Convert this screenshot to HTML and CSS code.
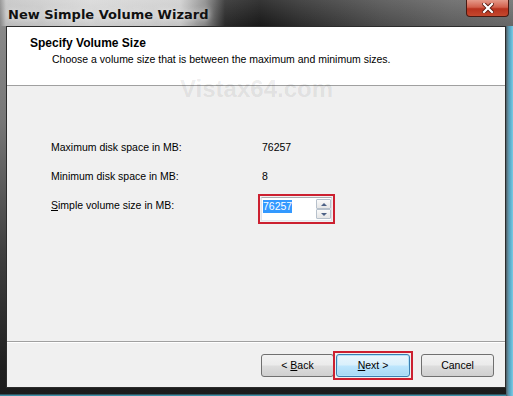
FILE: index.html
```html
<!doctype html>
<html>
<head>
  <title>New Simple Volume Wizard</title>
  <link rel="stylesheet" href="styles.css">
</head>
<body>
  <div class="window">
    <div class="titlebar">
      <span class="title">New Simple Volume Wizard</span>
      <div class="close">
        <svg width="12" height="10" viewBox="0 0 12 10">
          <path d="M2 1 L10 9 M10 1 L2 9" stroke="#5a1a10" stroke-width="4" stroke-linecap="square"/>
          <path d="M2 1 L10 9 M10 1 L2 9" stroke="#fff" stroke-width="2.2" stroke-linecap="square"/>
        </svg>
      </div>
    </div>
    <div class="frame">
      <div class="client">
        <div class="header">
          <div class="heading">Specify Volume Size</div>
          <div class="subheading">Choose a volume size that is between the maximum and minimum sizes.</div>
        </div>
        <div class="content">
          <div class="row row-max">
            <span class="label">Maximum disk space in MB:</span>
            <span class="value">76257</span>
          </div>
          <div class="row row-min">
            <span class="label">Minimum disk space in MB:</span>
            <span class="value">8</span>
          </div>
          <div class="row row-size">
            <span class="label label-size"><u>S</u>imple volume size in MB:</span>
            <div class="mark spin-mark">
              <div class="spin">
                <span class="selected">76257</span>
                <div class="spin-buttons">
                  <div class="spin-btn"><span class="arrow-up"></span></div>
                  <div class="spin-btn"><span class="arrow-down"></span></div>
                </div>
              </div>
            </div>
          </div>
        </div>
        <div class="footer">
          <button class="btn">&lt; <u>B</u>ack</button>
          <div class="mark btn-mark">
            <button class="btn btn-default"><u>N</u>ext &gt;</button>
          </div>
          <button class="btn btn-cancel">Cancel</button>
        </div>
        <div class="watermark">Vistax64.com</div>
      </div>
    </div>
  </div>
</body>
</html>
```

FILE: styles.css
```css
body { margin: 0; font-family: "Liberation Sans", Arial, sans-serif; font-size: 10.5px; color: #000; }

.window { width: 513px; height: 396px; display: flex; flex-direction: column; overflow: hidden;
  background: linear-gradient(to right, transparent 506px, #4b5a62 506px, #5f8da0 508px, #58a9c8 510px, #7ccbe4 513px),
              linear-gradient(to bottom, #8e8e8e 0, #777 120px, #404040 250px, #1f1f1f 370px, #1c1c1c 394px, #3f8ea6 395px); }

.titlebar { height: 26px; flex: none; display: flex; justify-content: space-between; align-items: flex-start;
  background: linear-gradient(to bottom, rgba(255,255,255,0.12), rgba(0,0,0,0.05)),
              linear-gradient(to right, #8c8c8c 0, #c4c4c4 6px, #d8d8d8 90px, #cfcfcf 180px, #8a8a8a 205px, #2a2a2a 225px, #1a1a1a 260px, #2e2e2e 300px, #4e4e4e 380px, #626262 450px, #6c6c6c 513px); }
.title { padding: 6px 0 0 8px; line-height: 17px; font-family: "DejaVu Sans", sans-serif; font-weight: bold; font-size: 13px; color: #111;
  text-shadow: 0 0 6px #eee; }
.close { width: 41px; height: 16px; margin-right: 4px; border: 1px solid #4a1a12; border-top: none; border-radius: 0 0 4px 4px;
  display: flex; align-items: center; justify-content: center;
  background: linear-gradient(to bottom, #e59a8a 0, #d2604c 45%, #b8321e 55%, #c4482e 100%); }

.frame { flex: 1; padding: 0 7px 8px 6px; display: flex; }
.client { position: relative; flex: 1; display: flex; flex-direction: column; border: 1px solid #2c2c2c; background: #f0f0f0; }

.header { height: 59px; flex: none; box-sizing: border-box; padding: 9px 0 0 23px; background: #fff; border-bottom: 1px solid #a0a0a0; }
.heading { font-weight: bold; font-size: 12px; line-height: 15px; }
.subheading { margin-top: 2px; padding-left: 22px; line-height: 13px; }

.content { flex: 1; padding: 55px 0 0 44px; border-bottom: 1px solid #a0a0a0; }
.row { display: flex; align-items: flex-start; line-height: 13px; }
.row-max { height: 29px; }
.row-min { height: 24px; }
.label { width: 211px; }
.label-size { margin-top: 5px; }

.mark { border: 2px solid #cc2030; padding: 1px; }
.spin-mark { margin-left: -4px; }
.spin { width: 69px; height: 22px; display: flex; justify-content: space-between; align-items: flex-start; background: #fff;
  border: 1px solid #abadb3; border-color: #abadb3 #dbdfe6 #e3e9ef #e2e3ea; }
.selected { margin: 2px 0 0 1px; background: #3399ff; color: #fff; line-height: 13px; }
.spin-buttons { margin-top: 1px; display: flex; flex-direction: column; }
.spin-btn { width: 13px; height: 8px; border: 1px solid #b7c1cc; border-radius: 1px; display: flex; align-items: center; justify-content: center;
  background: linear-gradient(to bottom, #fafafa, #e6e6e6); }
.arrow-up { border: 3px solid transparent; border-top: none; border-bottom: 3px solid #4d6185; }
.arrow-down { border: 3px solid transparent; border-bottom: none; border-top: 3px solid #4d6185; }

.footer { height: 44px; flex: none; display: flex; justify-content: flex-end; align-items: center; padding-right: 11px; border-top: 1px solid #fff; }
.btn { width: 73px; height: 23px; padding: 0; font-family: "Liberation Sans", Arial, sans-serif; font-size: 10.5px; color: #000;
  border: 1px solid #707070; border-radius: 3px;
  background: linear-gradient(to bottom, #f2f2f2 0, #ebebeb 48%, #dddddd 52%, #cfcfcf 100%); }
.btn-default { display: block; width: 74px; border-color: #3c7fb1; box-shadow: inset 0 0 0 1px #b2e4fb;
  background: linear-gradient(to bottom, #eaf6fd 0, #d9f0fc 48%, #bee6fd 52%, #a7d9f5 100%); }
.btn-mark { margin-left: -1px; }
.btn-cancel { margin-left: 8px; }

.watermark { position: absolute; left: 173px; top: 50px; font-size: 24px; font-weight: bold; line-height: 24px; color: rgba(0,0,0,0.08); }
```
